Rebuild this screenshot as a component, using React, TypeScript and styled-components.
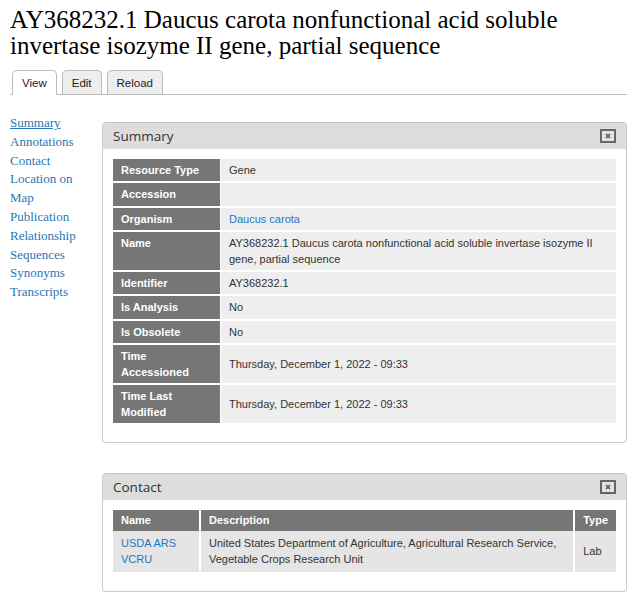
import React from "react";
import styled, { createGlobalStyle } from "styled-components";

const GlobalStyle = createGlobalStyle`
  html, body {
    margin: 0;
    padding: 0;
    background: #fff;
  }
`;

const Page = styled.div`
  padding: 7px 16px 0 10px;
  font-family: "Liberation Serif", serif;
  color: #000;
`;

const Title = styled.h1`
  margin: 0 0 11px;
  font-size: 25px;
  line-height: 26px;
  font-weight: 400;
`;

const TabBar = styled.ul`
  display: flex;
  gap: 5px;
  margin: 0;
  padding: 0 0 0 2px;
  list-style: none;
  border-bottom: 1px solid #bbb;
  height: 24px;
`;

const Tab = styled.li<{ $active?: boolean }>`
  height: 23px;
  padding: 0 9px;
  display: flex;
  align-items: center;
  border: 1px solid #bbb;
  border-bottom: ${(p) => (p.$active ? "1px solid #fff" : "none")};
  border-radius: 5px 5px 0 0;
  background: ${(p) => (p.$active ? "#fff" : "#eee")};
  font-family: "Liberation Sans", Arial, sans-serif;
  font-size: 11.5px;
  color: #222;
  cursor: pointer;
`;

const Main = styled.div`
  display: flex;
  gap: 12px;
  padding-top: 19px;
`;

const Sidebar = styled.nav`
  width: 80px;
  flex-shrink: 0;
  display: flex;
  flex-direction: column;
`;

const SideLink = styled.a<{ $active?: boolean }>`
  font-size: 13px;
  line-height: 18.8px;
  color: #2778b6;
  text-decoration: ${(p) => (p.$active ? "underline" : "none")};
  cursor: pointer;
`;

const Panels = styled.div`
  flex: 1;
  display: flex;
  flex-direction: column;
  gap: 30px;
  padding-top: 8px;
`;

const Panel = styled.section`
  border: 1px solid #ccc;
  border-top-color: #c4c4c4;
  border-radius: 4px;
  overflow: hidden;
  background: #fff;
`;

const PanelHeader = styled.div`
  height: 26px;
  padding: 0 10px;
  display: flex;
  align-items: center;
  justify-content: space-between;
  background: #dddddd;
  font-family: "Open Sans", sans-serif;
  font-size: 13.5px;
  color: #333;
`;

const PanelBody = styled.div`
  padding: 10px 10px 19px;
`;

const Table = styled.table`
  width: 100%;
  border-collapse: collapse;
  font-family: "Liberation Sans", Arial, sans-serif;
  font-size: 11px;
  line-height: 16px;
`;

const Row = styled.tr`
  border-bottom: 2px solid #fff;
  &:last-child {
    border-bottom: none;
  }
`;

const KeyCell = styled.th`
  width: 91px;
  padding: 3px 8px 3.25px;
  background: #767676;
  color: #fff;
  font-weight: 700;
  text-align: left;
  vertical-align: top;
  border-right: 1px solid #fff;
`;

const ValueCell = styled.td`
  padding: 3px 8px 3.25px;
  background: #eeeeee;
  color: #333;
  vertical-align: middle;
`;

const HeadCell = styled.th<{ $w?: number }>`
  width: ${(p) => (p.$w ? `${p.$w}px` : "auto")};
  padding: 2px 8px 2.5px;
  background: #767676;
  color: #fff;
  font-weight: 700;
  text-align: left;
  border-right: 2px solid #fff;
  &:last-child {
    border-right: none;
  }
`;

const DataCell = styled.td`
  padding: 4px 8px 5px;
  background: #e5e5e5;
  color: #333;
  vertical-align: middle;
  border-right: 2px solid #fff;
  &:last-child {
    border-right: none;
  }
`;

const Link = styled.a`
  color: #1f78c1;
  text-decoration: none;
  cursor: pointer;
`;

const CloseIcon = () => (
  <svg width="16" height="14" viewBox="0 0 16 14">
    <rect x="1" y="1" width="14" height="12" fill="#dfe3e8" stroke="#666" strokeWidth="2" />
    <path d="M6 5 L10 9 M10 5 L6 9" stroke="#555" strokeWidth="1.6" />
  </svg>
);

const summaryRows: { key: string; value: React.ReactNode }[] = [
  { key: "Resource Type", value: "Gene" },
  { key: "Accession", value: "" },
  { key: "Organism", value: <Link>Daucus carota</Link> },
  {
    key: "Name",
    value:
      "AY368232.1 Daucus carota nonfunctional acid soluble invertase isozyme II gene, partial sequence",
  },
  { key: "Identifier", value: "AY368232.1" },
  { key: "Is Analysis", value: "No" },
  { key: "Is Obsolete", value: "No" },
  { key: "Time Accessioned", value: "Thursday, December 1, 2022 - 09:33" },
  { key: "Time Last Modified", value: "Thursday, December 1, 2022 - 09:33" },
];

const sideLinks = [
  "Summary",
  "Annotations",
  "Contact",
  "Location on Map",
  "Publication",
  "Relationship",
  "Sequences",
  "Synonyms",
  "Transcripts",
];

const App = () => {
  return (
    <Page>
      <GlobalStyle />
      <Title>
        AY368232.1 Daucus carota nonfunctional acid soluble invertase isozyme II gene, partial
        sequence
      </Title>
      <TabBar>
        <Tab $active>View</Tab>
        <Tab>Edit</Tab>
        <Tab>Reload</Tab>
      </TabBar>
      <Main>
        <Sidebar>
          {sideLinks.map((l, i) => (
            <SideLink key={l} $active={i === 0}>
              {l}
            </SideLink>
          ))}
        </Sidebar>
        <Panels>
          <Panel>
            <PanelHeader>
              <span>Summary</span>
              <CloseIcon />
            </PanelHeader>
            <PanelBody>
              <Table>
                <tbody>
                  {summaryRows.map((r) => (
                    <Row key={r.key}>
                      <KeyCell>{r.key}</KeyCell>
                      <ValueCell>{r.value}</ValueCell>
                    </Row>
                  ))}
                </tbody>
              </Table>
            </PanelBody>
          </Panel>
          <Panel>
            <PanelHeader>
              <span>Contact</span>
              <CloseIcon />
            </PanelHeader>
            <PanelBody>
              <Table>
                <thead>
                  <Row>
                    <HeadCell $w={70}>Name</HeadCell>
                    <HeadCell>Description</HeadCell>
                    <HeadCell $w={22}>Type</HeadCell>
                  </Row>
                </thead>
                <tbody>
                  <Row>
                    <DataCell>
                      <Link>USDA ARS VCRU</Link>
                    </DataCell>
                    <DataCell>
                      United States Department of Agriculture, Agricultural Research Service,
                      Vegetable Crops Research Unit
                    </DataCell>
                    <DataCell>Lab</DataCell>
                  </Row>
                </tbody>
              </Table>
            </PanelBody>
          </Panel>
        </Panels>
      </Main>
    </Page>
  );
};

export default App;
